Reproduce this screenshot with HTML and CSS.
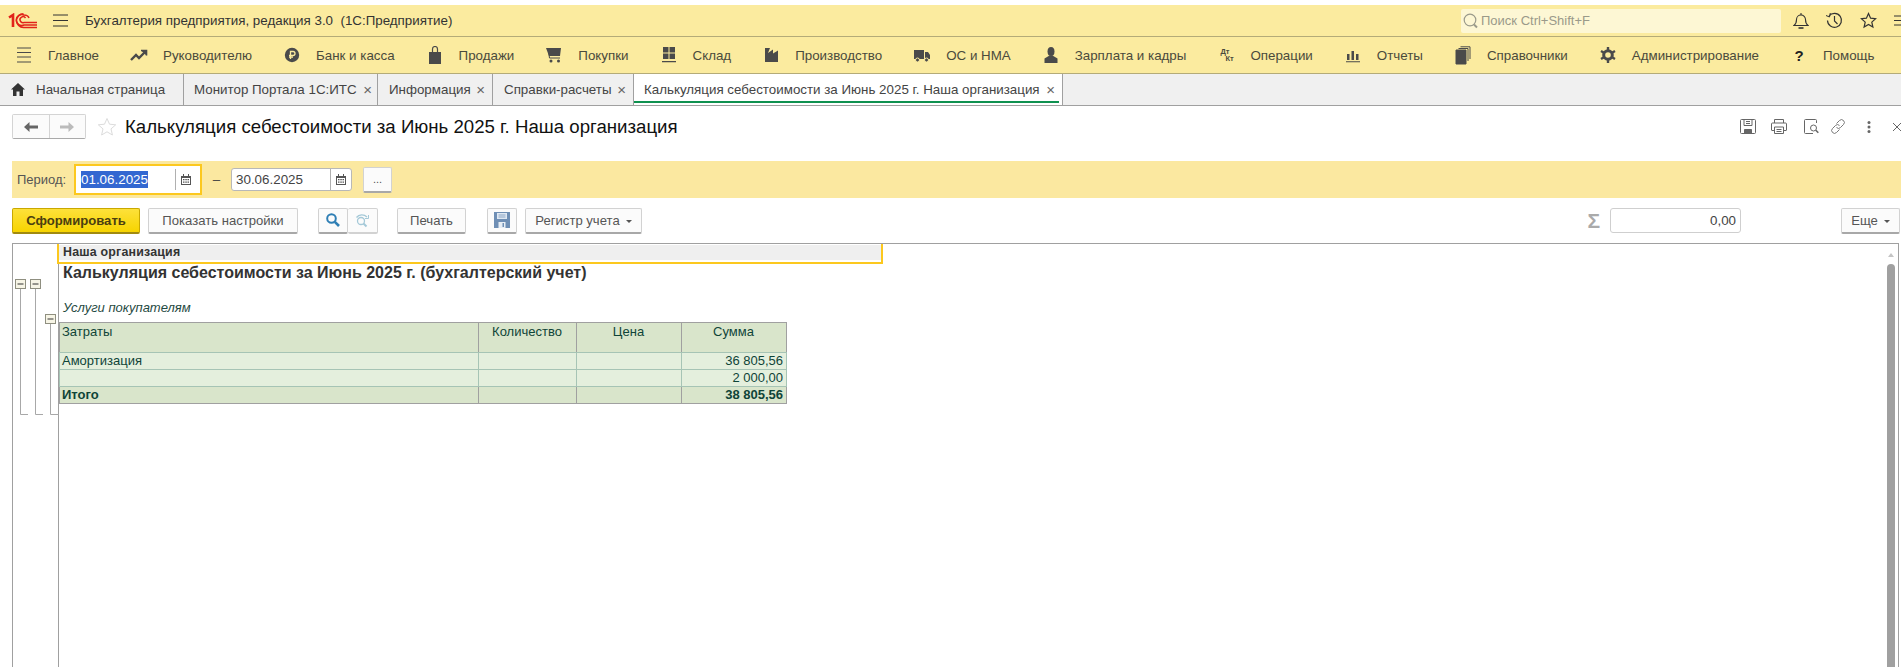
FILE: index.html
```html
<!DOCTYPE html>
<html lang="ru">
<head>
    <meta charset="UTF-8">
    <title>Бухгалтерия предприятия, редакция 3.0</title>
    <link rel="stylesheet" href="styles.css">
</head>
<body>
    <header class="title-bar">
        <svg class="logo" width="30" height="16" viewBox="0 0 30 16" fill="none" stroke="#e2231a">
            <path d="M1 4.500 L5 2 V14" stroke-width="2.600"/>
            <path d="M29 12 H16 A5.500 5.500 0 1 1 16 2 C19 2 20.500 3.500 21 5" stroke-width="1.500"/>
            <path d="M29 14.500 H15.500 A8 8 0 0 1 8.500 8 A7 7 0 0 1 15.500 .8" stroke-width="1.500"/>
            <path d="M29 9.500 H16 A3 3 0 1 1 17.500 5" stroke-width="1.500"/>
        </svg>
        <svg class="burger" width="15" height="13" viewBox="0 0 15 13" stroke="#333"><path d="M0 1h15M0 6.500h15M0 12h15"/></svg>
        <span class="app-name">Бухгалтерия предприятия, редакция 3.0&nbsp; (1С:Предприятие)</span>
        <div class="search">
            <svg width="16" height="18" viewBox="0 0 16 18" fill="none" stroke="#9a9a8a" stroke-width="1.200"><circle cx="7" cy="8" r="5.800"/><path d="M11 12.500l3 3" stroke-width="2"/></svg>
            <span>Поиск Ctrl+Shift+F</span>
        </div>
        <div class="title-icons">
            <svg width="16" height="18" viewBox="0 0 16 18" fill="none" stroke="#333" stroke-width="1.100"><path d="M1 13.500 C3 12 3.500 10 3.500 7.500 A4.500 4.500 0 0 1 12.500 7.500 C12.500 10 13 12 15 13.500Z"/><path d="M5.500 16h5" stroke-width="1.600"/><path d="M8 1v2"/></svg>
            <svg width="17" height="17" viewBox="0 0 17 17" fill="none" stroke="#333" stroke-width="1.200"><path d="M3 4 A7 7 0 1 1 1.500 8.500"/><path d="M0 3.500l3.500 1.500 .8-4" stroke-width="1"/><path d="M8.500 4v5l3 3"/></svg>
            <svg width="17" height="17" viewBox="0 0 17 17" fill="none" stroke="#333" stroke-width="1.200"><path d="M8.500 1.500l2.100 4.700 5 .5-3.800 3.400 1.100 5-4.400-2.600-4.400 2.600 1.100-5L1.400 6.700l5-.5z"/></svg>
            <svg width="14" height="13" viewBox="0 0 14 13" stroke="#333"><path d="M0 2h14M0 6.500h14M0 11h14"/></svg>
        </div>
    </header>

    <nav class="sections">
        <a class="section">
            <svg width="18" height="16" viewBox="0 0 18 16" stroke="#4a4a4a" stroke-width="1.100"><path d="M2 1h14M2 5.500h14M2 10h14M2 15h14"/></svg>
            Главное
        </a>
        <a class="section">
            <svg width="18" height="16" viewBox="0 0 18 16" fill="none" stroke="#4a4a4a" stroke-width="2.400"><path d="M1 13l5-5 3 3 6-6"/><path d="M11 3.500h5.500v5" stroke-width="1.600" fill="#4a4a4a"/></svg>
            Руководителю
        </a>
        <a class="section">
            <svg width="18" height="16" viewBox="0 0 18 16"><circle cx="9" cy="8" r="7.200" fill="#4a4a4a"/><path d="M7.500 12V4.500h2.500a2 2 0 0 1 0 4H6M6 10.200h4" fill="none" stroke="#fbeb9f" stroke-width="1.300"/></svg>
            Банк и касса
        </a>
        <a class="section">
            <svg width="18" height="18" viewBox="0 0 18 18"><path d="M3 6h12v12H3z" fill="#4a4a4a"/><path d="M6.500 8V3a2.500 2.500 0 0 1 5 0v5" fill="none" stroke="#4a4a4a" stroke-width="1.200"/></svg>
            Продажи
        </a>
        <a class="section">
            <svg width="18" height="16" viewBox="0 0 18 16"><path d="M1 1h15l-1 8H4z" fill="#4a4a4a"/><path d="M3 1l1.500 10H15" fill="none" stroke="#4a4a4a"/><circle cx="6" cy="14" r="1.500" fill="#4a4a4a"/><circle cx="13.500" cy="14" r="1.500" fill="#4a4a4a"/></svg>
            Покупки
        </a>
        <a class="section">
            <svg width="18" height="16" viewBox="0 0 18 16" fill="#4a4a4a"><path d="M3 0h5.500v5.500H3zM9.500 0H15v5.500H9.500zM3 6.500h5.500V12H3zM9.500 6.500H15V12H9.500zM2 14h14v1.300H2z"/></svg>
            Склад
        </a>
        <a class="section">
            <svg width="18" height="16" viewBox="0 0 18 16" fill="#4a4a4a"><path d="M3 1h5L6 6l5-3.500v4L16 3.500V15H3z"/></svg>
            Производство
        </a>
        <a class="section">
            <svg width="18" height="16" viewBox="0 0 18 16" fill="#4a4a4a"><path d="M1 3h10v9H1zM12 5h3l2 3v4h-5z"/><circle cx="4.500" cy="13" r="2" stroke="#fbeb9f"/><circle cx="13.500" cy="13" r="2" stroke="#fbeb9f"/></svg>
            ОС и НМА
        </a>
        <a class="section">
            <svg width="18" height="16" viewBox="0 0 18 16" fill="#4a4a4a"><ellipse cx="9" cy="4.500" rx="3.500" ry="4.500"/><path d="M7.500 8.500h3l5 3V16h-13v-4.500z"/></svg>
            Зарплата и кадры
        </a>
        <a class="section">
            <span class="dt-kt"><b>Дт</b><b>Кт</b></span>
            Операции
        </a>
        <a class="section">
            <svg width="18" height="16" viewBox="0 0 18 16" fill="#4a4a4a"><path d="M3 7h2.500v6H3zM7.500 4H10v9H7.500zM12 7h2.500v6H12zM2 14.200h14v1H2z"/></svg>
            Отчеты
        </a>
        <a class="section">
            <svg width="18" height="19" viewBox="0 0 18 19" fill="none" stroke="#4a4a4a"><path d="M2 4h10v14H2z" fill="#4a4a4a"/><path d="M4.500 2.500H14V15M6.500 .800H16V13"/></svg>
            Справочники
        </a>
        <a class="section">
            <svg width="18" height="16" viewBox="0 0 18 16" fill="none" stroke="#4a4a4a"><circle cx="9" cy="8" r="4.300" stroke-width="3"/><path d="M9 0v3M9 13v3M2 4l2.500 1.500M16 4l-2.500 1.500M2 12l2.500-1.500M16 12l-2.500-1.500" stroke-width="2.400"/></svg>
            Администрирование
        </a>
        <a class="section">
            <span class="help-mark">?</span>
            Помощь
        </a>
    </nav>

    <div class="tabs">
        <a class="tab tab-home">
            <svg width="14" height="13" viewBox="0 0 14 13" fill="#333"><path d="M7 0L0 6.500h2V13h3.500V8.500h3V13H12V6.500h2z"/></svg>
            Начальная страница
        </a>
        <a class="tab tab-monitor">Монитор Портала 1С:ИТС <i>×</i></a>
        <a class="tab tab-info">Информация <i>×</i></a>
        <a class="tab tab-calc">Справки-расчеты <i>×</i></a>
        <a class="tab tab-active">Калькуляция себестоимости за Июнь 2025 г. Наша организация <i>×</i></a>
    </div>

    <div class="doc-head">
        <div class="nav-buttons">
            <button class="nav-btn"><svg width="14" height="10" viewBox="0 0 14 10" fill="#666"><path d="M0 5l5.500-5v3.500H14v3H5.500V10z"/></svg></button>
            <button class="nav-btn"><svg width="14" height="10" viewBox="0 0 14 10" fill="#bbb"><path d="M14 5L8.500 0v3.500H0v3h8.500V10z"/></svg></button>
        </div>
        <svg class="fav" width="20" height="20" viewBox="0 0 20 20" fill="none" stroke="#dcdcdc"><path d="M10 1.500l2.500 5.700 6.200.6-4.700 4.100 1.400 6.100-5.400-3.200-5.400 3.200 1.400-6.100L1.300 7.800l6.200-.6z"/></svg>
        <h1>Калькуляция себестоимости за Июнь 2025 г. Наша организация</h1>
        <div class="doc-icons">
            <svg width="16" height="15" viewBox="0 0 16 15" fill="none" stroke="#666"><path d="M1.500 .500h13a1 1 0 0 1 1 1v12a1 1 0 0 1-1 1h-13a1 1 0 0 1-1-1v-12a1 1 0 0 1 1-1z"/><path d="M4 .500v6h8v-6M6 2.500h4M6 4.500h4"/><path d="M4.500 14.500v-4h7v4" fill="#666"/></svg>
            <svg width="16" height="15" viewBox="0 0 16 15" fill="none" stroke="#666"><path d="M3.500 4V.500h9V4M3.500 11.500H1a.5.5 0 0 1-.5-.5V5a1 1 0 0 1 1-1h13a1 1 0 0 1 1 1v6a.5.5 0 0 1-.5.5h-2.500"/><path d="M3.500 8h9v6.500h-9zM5.500 10.500h5M5.500 12.500h5"/></svg>
            <svg class="doc-find" width="16" height="15" viewBox="0 0 16 15" fill="none" stroke="#666"><path d="M9 14.500H1.500a1 1 0 0 1-1-1v-12a1 1 0 0 1 1-1h10a1 1 0 0 1 1 1V4"/><circle cx="9.500" cy="9" r="3"/><path d="M11.800 11.300l2.500 2.500" stroke-width="1.600"/></svg>
            <svg class="doc-link" width="16" height="15" viewBox="0 0 16 15" fill="none" stroke="#777"><path d="M6.500 4.500l3-3a2.800 2.800 0 0 1 4 4l-3 3a2.800 2.800 0 0 1-4 0M9.500 10.500l-3 3a2.800 2.800 0 0 1-4-4l3-3a2.800 2.800 0 0 1 4 0"/></svg>
            <svg class="doc-more" width="4" height="12" viewBox="0 0 4 12" fill="#666"><circle cx="2" cy="1.500" r="1.500"/><circle cx="2" cy="6" r="1.500"/><circle cx="2" cy="10.500" r="1.500"/></svg>
            <svg width="10" height="10" viewBox="0 0 10 10" stroke="#666"><path d="M1 1l8 8M9 1l-8 8"/></svg>
        </div>
    </div>

    <div class="period-bar">
        <label class="period-label">Период:</label>
        <div class="date-focus">
            <div class="date-field date-field-first">
                <span class="date-value"><span class="selected">01.06.2025</span></span>
                <span class="date-cal"><svg width="10" height="11" viewBox="0 0 10 11" fill="#555"><path d="M0 2h2V0h1v2h4V0h1v2h2v9H0zM1 4v6h8V4zM2 5h1.500v1.200H2zM4.300 5h1.500v1.200H4.300zM6.500 5H8v1.200H6.500zM2 7.500h1.500v1.200H2zM4.300 7.500h1.500v1.200H4.300zM6.500 7.500H8v1.200H6.500z" fill-rule="evenodd"/></svg></span>
            </div>
        </div>
        <span class="dash">–</span>
        <div class="date-field date-field-second">
            <span class="date-value">30.06.2025</span>
            <span class="date-cal"><svg width="10" height="11" viewBox="0 0 10 11" fill="#555"><path d="M0 2h2V0h1v2h4V0h1v2h2v9H0zM1 4v6h8V4zM2 5h1.500v1.200H2zM4.300 5h1.500v1.200H4.300zM6.500 5H8v1.200H6.500zM2 7.500h1.500v1.200H2zM4.300 7.500h1.500v1.200H4.300zM6.500 7.500H8v1.200H6.500z" fill-rule="evenodd"/></svg></span>
        </div>
        <button class="btn btn-dots">...</button>
    </div>

    <div class="toolbar">
        <button class="btn btn-primary">Сформировать</button>
        <button class="btn btn-settings">Показать настройки</button>
        <div class="btn-pair">
            <button class="btn btn-icon"><svg width="14" height="14" viewBox="0 0 14 14" fill="none" stroke="#2f7fb5" stroke-width="2"><circle cx="5.500" cy="5.500" r="4.300"/><path d="M8.800 8.800l4.200 4.200" stroke-width="2.600"/></svg></button>
            <button class="btn btn-icon btn-muted"><svg width="15" height="15" viewBox="0 0 15 15" fill="none" stroke="#a5c9d8" stroke-width="1.300"><circle cx="6" cy="8" r="3.500"/><path d="M8.500 10.500l3 3" stroke-width="2"/><path d="M1.500 4.500C4 1 9 1 12 4"/><path d="M13.500 2v3.500H10" stroke-width="1"/></svg></button>
        </div>
        <button class="btn btn-print">Печать</button>
        <button class="btn btn-save"><svg width="16" height="16" viewBox="0 0 16 16"><path d="M0 0h16v16H0z" fill="#6f8fb5"/><path d="M3 1h10v6H3z" fill="#dfe8f2"/><path d="M4.500 10h7v6h-7z" fill="#e8eef5"/><path d="M8.500 11H10v4H8.500z" fill="#6f8fb5"/><path d="M4.500 3h7M4.500 5h7" stroke="#8ca6c5"/></svg></button>
        <button class="btn btn-register">Регистр учета <span class="caret"></span></button>
        <div class="toolbar-right">
            <span class="sigma">Σ</span>
            <div class="sum-field">0,00</div>
            <button class="btn btn-more">Еще <span class="caret"></span></button>
        </div>
    </div>

    <div class="report">
        <div class="outline">
            <svg width="46" height="200" viewBox="0 0 46 200" fill="none" stroke="#a8a8a8">
                <path d="M7.500 44V170.500H15M22.500 44V170.500H30M37.500 79V170.500H46"/>
                <g fill="#f7f5e6" stroke="#8f8f80">
                    <rect x="2.500" y="35.500" width="10" height="9"/>
                    <rect x="17.500" y="35.500" width="10" height="9"/>
                    <rect x="32.500" y="70.500" width="10" height="9"/>
                </g>
                <path d="M4.500 40h6M19.500 40h6M34.500 75h6" stroke="#333"/>
            </svg>
        </div>
        <div class="sheet">
            <div class="org-cell">Наша организация</div>
            <h2 class="report-title">Калькуляция себестоимости за Июнь 2025 г. (бухгалтерский учет)</h2>
            <p class="report-sub">Услуги покупателям</p>
            <table class="report-table">
                <thead>
                    <tr>
                        <th class="col-name">Затраты</th>
                        <th class="col-qty">Количество</th>
                        <th class="col-price">Цена</th>
                        <th class="col-sum">Сумма</th>
                    </tr>
                </thead>
                <tbody>
                    <tr>
                        <td>Амортизация</td>
                        <td></td>
                        <td></td>
                        <td class="num">36 805,56</td>
                    </tr>
                    <tr>
                        <td></td>
                        <td></td>
                        <td></td>
                        <td class="num">2 000,00</td>
                    </tr>
                </tbody>
                <tfoot>
                    <tr>
                        <td>Итого</td>
                        <td></td>
                        <td></td>
                        <td class="num">38 805,56</td>
                    </tr>
                </tfoot>
            </table>
        </div>
        <div class="scrollbar">
            <span class="scroll-up"></span>
            <span class="scroll-thumb"></span>
        </div>
    </div>
</body>
</html>
```

FILE: styles.css
```css
* {
    box-sizing: border-box;
}

html, body {
    height: 100%;
}

body {
    margin: 0;
    display: flex;
    flex-direction: column;
    overflow: hidden;
    padding-top: 5px;
    background-color: #ffffff;
    font-family: "Liberation Sans", Arial, sans-serif;
    font-size: 13.35px;
    color: #4a4a3c;
}

/* Верхняя полоса */
.title-bar {
    height: 32px;
    flex: none;
    display: flex;
    align-items: center;
    background-color: #fbeb9f;
    border-bottom: 1px solid #b4ab78;
}

.logo {
    margin-left: 8px;
}

.burger {
    margin-left: 15px;
}

.app-name {
    margin-left: 17px;
    font-size: 13.35px;
    color: #333;
}

.search {
    margin-left: auto;
    width: 320px;
    height: 24px;
    display: flex;
    align-items: center;
    gap: 2px;
    padding-left: 2px;
    background-color: #fdf7d4;
    border-radius: 2px;
    color: #9a9a8a;
    font-size: 13px;
}

.title-icons {
    width: 120px;
    flex: none;
    display: flex;
    align-items: center;
    gap: 17px;
    padding-left: 12px;
    overflow: hidden;
}

.title-icons svg {
    flex: none;
}

/* Разделы */
.sections {
    height: 37px;
    flex: none;
    display: flex;
    align-items: center;
    background-color: #fbeb9f;
    border-bottom: 1px solid #b4ab78;
}

.section {
    display: flex;
    align-items: center;
    gap: 15px;
    padding: 0 16px 0 15px;
    white-space: nowrap;
    color: #4a4a3c;
}

.section svg {
    flex: none;
}

.dt-kt {
    width: 18px;
    padding-left: 3px;
    display: flex;
    flex-direction: column;
    font-size: 7.5px;
    line-height: 7px;
}

.dt-kt b:last-child {
    margin-left: 5px;
}

.help-mark {
    width: 18px;
    text-align: center;
    font-weight: bold;
    font-size: 15px;
    color: #222;
}

/* Вкладки */
.tabs {
    height: 32px;
    flex: none;
    display: flex;
    background-color: #f0f0f0;
    border-bottom: 1px solid #a0a0a0;
}

.tab {
    display: flex;
    align-items: center;
    justify-content: space-between;
    padding: 0 7px 0 11px;
    border-right: 1px solid #a0a0a0;
    white-space: nowrap;
    color: #444;
}

.tab i {
    font-style: normal;
    font-size: 15px;
    color: #666;
}

.tab-home {
    width: 184px;
    justify-content: flex-start;
    gap: 11px;
}

.tab-monitor {
    width: 194px;
    padding: 0 5px 0 10px;
}

.tab-info {
    width: 115px;
}

.tab-calc {
    width: 141px;
}

.tab-active {
    width: 429px;
    padding-left: 10px;
    background-color: #ffffff;
    position: relative;
}

.tab-active::after {
    content: "";
    position: absolute;
    left: 0;
    right: 3px;
    bottom: 2px;
    height: 2px;
    background-color: #0f9150;
}

/* Заголовок документа */
.doc-head {
    height: 55px;
    flex: none;
    display: flex;
    align-items: center;
    padding: 0 0 14px 12px;
}

.nav-buttons {
    display: flex;
    height: 25px;
    width: 74px;
    flex: none;
    border: 1px solid #d4d4d4;
    border-bottom-color: #aaa;
    border-radius: 2px;
}

.nav-btn {
    flex: 1;
    padding: 0;
    border: none;
    background-color: #fbfbfb;
    display: flex;
    align-items: center;
    justify-content: center;
}

.nav-btn:first-child {
    border-right: 1px solid #d4d4d4;
}

.fav {
    margin-left: 11px;
    flex: none;
}

.doc-head h1 {
    margin: 0 0 0 8px;
    font-size: 18.65px;
    font-weight: normal;
    color: #111;
    white-space: nowrap;
}

.doc-icons {
    margin-left: auto;
    display: flex;
    align-items: center;
    gap: 15px;
    margin-right: -1px;
}

.doc-find {
    margin-left: 2px;
}

.doc-link {
    margin-left: -5px;
}

.doc-more {
    margin: 0 6px;
}

/* Период */
.period-bar {
    height: 37px;
    flex: none;
    margin-left: 12px;
    display: flex;
    align-items: center;
    background-color: #fbe8a0;
    padding-left: 5px;
}

.period-label {
    width: 57px;
    font-size: 13px;
    color: #555;
}

.date-focus {
    width: 128px;
    height: 31px;
    padding: 3px 4px 3px 5px;
    background-color: #ffffff;
    border: 2px solid #fcc81e;
}

.date-field {
    display: flex;
    align-items: center;
    background-color: #ffffff;
}

.date-field-first {
    height: 100%;
}

.date-field-second {
    width: 121px;
    height: 23px;
    border: 1px solid #b8b8b8;
    border-radius: 3px;
    padding-left: 4px;
}

.date-value {
    flex: 1;
    font-size: 13.4px;
    color: #444;
}

.selected {
    background-color: #3367d1;
    color: #ffffff;
    padding: 1px 0;
}

.date-cal {
    width: 21px;
    align-self: stretch;
    display: flex;
    align-items: center;
    justify-content: center;
    border-left: 1px solid #b0b0b0;
}

.dash {
    width: 29px;
    text-align: center;
    color: #444;
}

/* Кнопки */
.btn {
    height: 26px;
    padding: 0;
    border: 1px solid #d2d2d2;
    border-bottom: 2px solid #a8a8a8;
    border-radius: 2px;
    background-color: #fbfbfb;
    font-family: inherit;
    font-size: 13.1px;
    color: #555;
    white-space: nowrap;
    display: flex;
    align-items: center;
    justify-content: center;
    flex: none;
}

.btn-dots {
    width: 29px;
    margin-left: 11px;
    font-size: 11px;
}

.toolbar {
    height: 45px;
    flex: none;
    display: flex;
    align-items: center;
    padding: 0 1px 0 12px;
    gap: 8px;
}

.btn-primary {
    width: 128px;
    background-color: #fbd90c;
    background-image: linear-gradient(#fde13a, #f7d400);
    border-color: #c9a800;
    border-bottom-color: #a18a10;
    font-weight: bold;
    color: #4a3e10;
}

.btn-settings {
    width: 150px;
}

.btn-pair {
    display: flex;
    margin-left: 12px;
}

.btn-icon {
    width: 30px;
}

.btn-muted {
    border-left: none;
    border-bottom-color: #d2d2d2;
}

.btn-print {
    width: 69px;
    margin-left: 11px;
}

.btn-save {
    width: 30px;
    margin-left: 13px;
}

.btn-register {
    width: 117px;
    gap: 6px;
}

.caret {
    width: 0;
    height: 0;
    border-left: 3px solid transparent;
    border-right: 3px solid transparent;
    border-top: 3px solid #555;
    margin-top: 2px;
}

.toolbar-right {
    margin-left: auto;
    display: flex;
    align-items: center;
}

.sigma {
    font-size: 21px;
    color: #aaa;
    font-weight: bold;
    margin-right: 10px;
}

.sum-field {
    width: 131px;
    height: 25px;
    line-height: 23px;
    padding-right: 4px;
    border: 1px solid #cfcfcf;
    border-radius: 3px;
    text-align: right;
    color: #444;
}

.btn-more {
    width: 59px;
    margin-left: 100px;
    gap: 6px;
}

/* Отчет */
.report {
    flex: 1;
    min-height: 0;
    margin: 0 2px 0 12px;
    display: flex;
    position: relative;
    border: 1px solid #a0a0a0;
    border-bottom: none;
    overflow: hidden;
}

.outline {
    width: 46px;
    flex: none;
    border-right: 1px solid #a0a0a0;
}

.outline svg {
    display: block;
}

.sheet {
    flex: 1;
    min-width: 0;
}

.org-cell {
    position: relative;
    z-index: 1;
    width: 826px;
    height: 20px;
    margin-left: -2px;
    padding: 2px 0 0 4px;
    background-color: #efefef;
    border: 2px solid #fcc81e;
    border-width: 0 2px 2px;
    box-shadow: inset 0 1px 0 #ffffff, inset 0 -2px 0 #ffffff;
    font-size: 12.4px;
    font-weight: bold;
    line-height: 13px;
    letter-spacing: .2px;
    color: #333;
}

.report-title {
    margin: 0;
    padding-left: 4px;
    height: 27px;
    font-size: 16px;
    line-height: 18px;
    font-weight: bold;
    color: #333;
}

.report-sub {
    margin: 0;
    padding-left: 4px;
    height: 31px;
    line-height: 15px;
    padding-top: 9px;
    font-size: 13px;
    font-style: italic;
    color: #1f4a42;
}

.report-table {
    width: 727px;
    border-collapse: collapse;
    table-layout: fixed;
    font-size: 13px;
    color: #0f4438;
}

.report-table th,
.report-table td {
    padding: 0 3px 0 2px;
    font-weight: normal;
    vertical-align: top;
    border: 1px solid #a6c4b5;
    background-color: #e4efdd;
    height: 17px;
    line-height: 15px;
}

.report-table th {
    height: 30px;
    background-color: #d9e5cb;
    border: 1px solid #a0a0a0;
    border-bottom-color: #a6c4b5;
    text-align: center;
    padding-top: 1px;
}

.report-table tfoot td {
    background-color: #d9e5cb;
    border-color: #a0a0a0;
    font-weight: bold;
}

.report-table .col-name {
    width: 419px;
    text-align: left;
}

.col-qty {
    width: 98px;
}

.col-price {
    width: 105px;
}

.col-sum {
    width: 105px;
}

.report-table .num {
    text-align: right;
}

.scrollbar {
    width: 14px;
    flex: none;
    display: flex;
    flex-direction: column;
    align-items: center;
    padding-top: 9px;
}

.scroll-up {
    width: 0;
    height: 0;
    border-left: 3px solid transparent;
    border-right: 3px solid transparent;
    border-bottom: 4px solid #c4c4c4;
}

.scroll-thumb {
    width: 8px;
    flex: 1;
    margin-top: 7px;
    border-radius: 4px 4px 0 0;
    background-color: #a0a0a0;
}
```
